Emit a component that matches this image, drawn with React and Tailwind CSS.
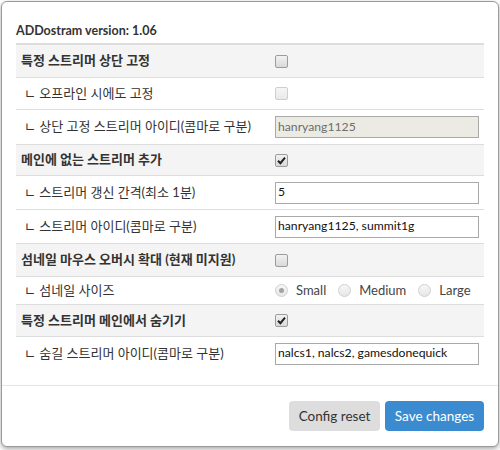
import React from "react";

const font = { fontFamily: '"Lato", "Noto Sans CJK KR", sans-serif' };

function Check({ checked = false, disabled = false }) {
  return (
    <span
      className={
        "relative inline-block w-[13px] h-[13px] rounded-[2px] border bg-gradient-to-b " +
        (disabled
          ? "border-[#cfcfcf] from-[#f6f6f6] to-[#e9e9e9]"
          : "border-[#9c9c9c] from-[#f2f2f2] to-[#d9d9d9]")
      }
    >
      {checked && (
        <svg viewBox="0 0 13 13" className="absolute -left-px -top-px w-[13px] h-[13px]">
          <path d="M3 6.8 L5.4 9.2 L10 3.6" fill="none" stroke="#222" strokeWidth="2" />
        </svg>
      )}
    </span>
  );
}

function Radio({ checked = false }) {
  return (
    <span className="relative inline-flex items-center justify-center w-[13px] h-[13px] rounded-full border border-[#cfcfcf] bg-gradient-to-b from-[#f7f7f7] to-[#e6e6e6]">
      {checked && <span className="w-[5px] h-[5px] rounded-full bg-[#a3a3a3]" />}
    </span>
  );
}

function TextInput({ value, disabled = false }) {
  return (
    <div
      className={
        "w-[204px] h-[22px] border px-[2px] flex items-center text-[12.2px] " +
        (disabled
          ? "bg-[#ebebe4] border-[#a9a9a9] text-[#6d6d6d]"
          : "bg-white border-[#a9a9a9] text-[#111]")
      }
    >
      {value}
    </div>
  );
}

function Row({ h, head = false, first = false, label, children }) {
  return (
    <div
      className={
        "flex items-center " +
        h +
        (first ? " border-t-2" : " border-t") +
        " border-[#dddddd]" +
        (head ? " bg-[#f4f4f4]" : "")
      }
    >
      <div
        className={
          "w-[254px] text-[13px] text-[#333] whitespace-nowrap " +
          (head ? "font-bold pl-[5px]" : "pl-[8px]")
        }
      >
        {label}
      </div>
      <div className="flex-1 pl-[5px] flex items-center">{children}</div>
    </div>
  );
}

export default function App() {
  return (
    <div className="w-[500px] h-[450px] bg-white pl-[1px] pt-[1px]" style={font}>
      <div className="w-[498px] h-[446px] border border-[#9a9a9a] rounded-[6px] shadow-[0_2px_5px_rgba(0,0,0,0.35)] bg-white flex flex-col">
        <div className="px-[14px] pt-[19px] pb-[15px]">
          <div className="h-[20px] mb-[2px] flex items-center text-[12.5px] font-bold text-[#333]">
            ADDostram version: 1.06
          </div>
          <Row h="h-[34px]" head first label="특정 스트리머 상단 고정">
            <Check />
          </Row>
          <Row h="h-[32px]" label="ㄴ 오프라인 시에도 고정">
            <Check disabled />
          </Row>
          <Row h="h-[35px]" label="ㄴ 상단 고정 스트리머 아이디(콤마로 구분)">
            <TextInput value="hanryang1125" disabled />
          </Row>
          <Row h="h-[31px]" head label="메인에 없는 스트리머 추가">
            <Check checked />
          </Row>
          <Row h="h-[34px]" label="ㄴ 스트리머 갱신 간격(최소 1분)">
            <TextInput value="5" />
          </Row>
          <Row h="h-[34px]" label="ㄴ 스트리머 아이디(콤마로 구분)">
            <TextInput value="hanryang1125, summit1g" />
          </Row>
          <Row h="h-[33px]" head label="섬네일 마우스 오버시 확대 (현재 미지원)">
            <Check />
          </Row>
          <Row h="h-[28px]" label="ㄴ 섬네일 사이즈">
            <div className="flex items-center text-[13px] text-[#444]">
              <Radio checked />
              <span className="ml-[8px] mr-[12px]">Small</span>
              <Radio />
              <span className="ml-[8px] mr-[12px]">Medium</span>
              <Radio />
              <span className="ml-[8px]">Large</span>
            </div>
          </Row>
          <Row h="h-[32px]" head label="특정 스트리머 메인에서 숨기기">
            <Check checked />
          </Row>
          <Row h="h-[34px]" label="ㄴ 숨길 스트리머 아이디(콤마로 구분)">
            <TextInput value="nalcs1, nalcs2, gamesdonequick" />
          </Row>
        </div>
        <div className="border-t border-[#e5e5e5] px-[14px] pt-[15px] flex justify-end gap-[5px]">
          <button className="w-[91px] h-[30px] rounded-[4px] bg-[#dddddd] text-[#333] text-[13.5px]">
            Config reset
          </button>
          <button className="w-[99px] h-[30px] rounded-[4px] bg-[#3a8bd0] text-white text-[13.5px]">
            Save changes
          </button>
        </div>
      </div>
    </div>
  );
}
